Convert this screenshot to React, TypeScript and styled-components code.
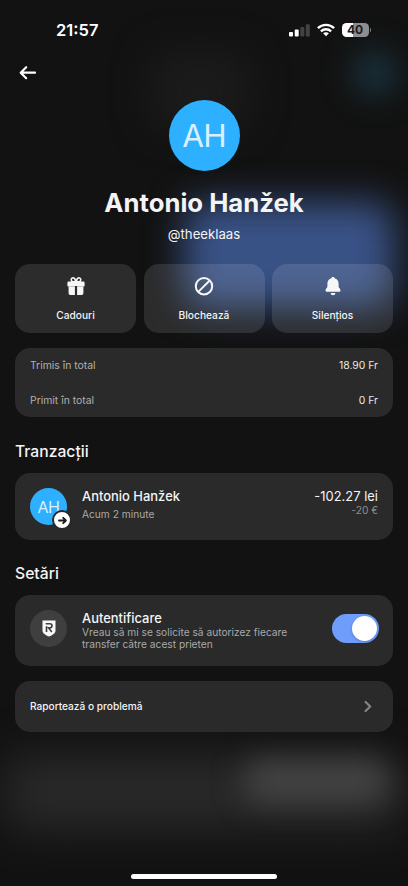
import React from 'react';
import styled, { createGlobalStyle } from 'styled-components';

const GlobalStyle = createGlobalStyle`
  * { box-sizing: border-box; }
  body { margin: 0; background: #121212; }
`;

const Screen = styled.main`
  position: relative;
  isolation: isolate;
  display: flex;
  flex-direction: column;
  width: 408px;
  height: 886px;
  overflow: hidden;
  background: #121212;
  color: #f4f4f5;
  font-family: Inter, "Noto Sans", sans-serif;
`;

const Glow = styled.div<{ $x: number; $y: number; $w: number; $h: number; $color: string; $blur: number }>`
  position: absolute;
  z-index: -1;
  left: ${(p) => p.$x}px;
  top: ${(p) => p.$y}px;
  width: ${(p) => p.$w}px;
  height: ${(p) => p.$h}px;
  border-radius: 20px;
  background: ${(p) => p.$color};
  filter: blur(${(p) => p.$blur}px);
`;

const StatusBar = styled.header`
  display: flex;
  justify-content: space-between;
  align-items: center;
  height: 60px;
  padding: 0 37px 0 56px;
`;

const Clock = styled.time`
  font-size: 16.5px;
  font-weight: 600;
  line-height: 20px;
  color: #fff;
`;

const StatusIcons = styled.div`
  display: flex;
  align-items: center;
  gap: 7px;
`;

const Battery = styled.div`
  display: flex;
  align-items: center;
  gap: 1px;
`;

const BatteryBody = styled.span`
  width: 27px;
  height: 14px;
  border-radius: 4.5px;
  background: linear-gradient(90deg, #fff 0 40%, #8b8d91 40%);
  color: #1a1b1d;
  font-size: 12px;
  font-weight: 700;
  line-height: 14px;
  text-align: center;
`;

const BatteryTip = styled.span`
  width: 1.5px;
  height: 4px;
  border-radius: 0 2px 2px 0;
  background: #77797d;
`;

const NavBar = styled.nav`
  display: flex;
  height: 40px;
  padding: 4px 0 0 19px;
`;

const BackButton = styled.button`
  display: block;
  width: 18px;
  height: 18px;
  padding: 0;
  border: 0;
  background: none;
`;

const Profile = styled.section`
  display: flex;
  flex-direction: column;
  align-items: center;
  height: 164px;
`;

const Avatar = styled.div<{ $size: number; $font: number }>`
  display: flex;
  align-items: center;
  justify-content: center;
  width: ${(p) => p.$size}px;
  height: ${(p) => p.$size}px;
  border-radius: 50%;
  background: #2db0ff;
  color: #d9f1ff;
  font-size: ${(p) => p.$font}px;
  line-height: 1;
  letter-spacing: -0.03em;
`;

const Name = styled.h1`
  margin: 15px 0 0;
  font-size: 25.7px;
  font-weight: 700;
  line-height: 34px;
  white-space: nowrap;
`;

const Handle = styled.p`
  margin: 5px 0 0;
  font-size: 13.2px;
  line-height: 18px;
`;

const Content = styled.div`
  display: flex;
  flex-direction: column;
  padding: 0 15px;
`;

const Actions = styled.div`
  display: grid;
  grid-template-columns: repeat(3, 1fr);
  gap: 7.5px;
  margin-bottom: 15px;
`;

const Action = styled.button`
  display: flex;
  flex-direction: column;
  align-items: center;
  gap: 10px;
  height: 69px;
  padding: 12px 0 0;
  border: 0;
  border-radius: 15px;
  background: rgba(255, 255, 255, 0.11);
  color: #f4f4f5;
  font: 500 10.2px/18px Inter, sans-serif;
`;

const Card = styled.section<{ $height: number; $pad?: string }>`
  display: flex;
  height: ${(p) => p.$height}px;
  padding: ${(p) => p.$pad ?? '15px'};
  border-radius: 15px;
  background: #2a2a2a;
`;

const Totals = styled.dl`
  display: flex;
  flex: 1;
  flex-direction: column;
  justify-content: space-between;
  margin: 0;
`;

const TotalRow = styled.div`
  display: flex;
  justify-content: space-between;
  font-size: 10.4px;
  line-height: 16px;
`;

const TotalLabel = styled.dt`
  color: #b0b0b2;
`;

const TotalValue = styled.dd`
  margin: 0;
  color: #e8e8e9;
`;

const SectionTitle = styled.h2<{ $top: number }>`
  margin: ${(p) => p.$top}px 0 10px;
  font-size: 15.7px;
  font-weight: 500;
  line-height: 22px;
`;

const Badge = styled.span`
  position: absolute;
  right: -5px;
  bottom: -5px;
  display: flex;
  align-items: center;
  justify-content: center;
  width: 20px;
  height: 20px;
  border: 2px solid #2a2a2a;
  border-radius: 50%;
  background: #fff;
`;

const Media = styled.div`
  position: relative;
  flex: none;
  width: 37px;
  height: 37px;
  margin-right: 15px;
`;

const ShieldDisc = styled.div`
  display: flex;
  align-items: center;
  justify-content: center;
  width: 37px;
  height: 37px;
  border-radius: 50%;
  background: #3f3f3f;
`;

const Details = styled.div`
  display: flex;
  flex: 1;
  flex-direction: column;
`;

const Amounts = styled.div`
  display: flex;
  flex-direction: column;
  align-items: flex-end;
`;

const ItemTitle = styled.span`
  font-size: 12.95px;
  font-weight: 500;
  line-height: 16px;
  white-space: nowrap;
`;

const Amount = styled.span`
  font-size: 12.95px;
  line-height: 16px;
`;

const Muted = styled.span<{ $top?: number; $line?: number; $color?: string }>`
  margin-top: ${(p) => p.$top ?? 0}px;
  color: ${(p) => p.$color ?? '#a9a9ab'};
  font-size: 10.2px;
  line-height: ${(p) => p.$line ?? 14}px;
  white-space: nowrap;
`;

const Toggle = styled.button`
  display: flex;
  justify-content: flex-end;
  align-items: center;
  width: 47px;
  height: 29px;
  margin: 4px -1px 0 0;
  padding: 0 2px 0 0;
  border: 0;
  border-radius: 15px;
  background: #6f9dfb;
`;

const Knob = styled.span`
  width: 25px;
  height: 25px;
  border-radius: 50%;
  background: #fff;
  box-shadow: 0 1px 3px rgba(0, 0, 0, 0.2);
`;

const Spacer = styled.div`
  height: 15px;
`;

const ReportLabel = styled.span`
  flex: 1;
  font-size: 10.15px;
  font-weight: 500;
  line-height: 16px;
`;

const HomeIndicator = styled.div`
  width: 146px;
  height: 5px;
  margin: auto auto 7px;
  border-radius: 3px;
  background: #fff;
`;

const SignalIcon = () => (
  <svg width="21" height="14" viewBox="0 0 21 14" fill="#fff">
    <rect x="0" y="9" width="4" height="4.5" rx="1" />
    <rect x="5.7" y="6.5" width="4" height="7" rx="1" />
    <rect x="11.3" y="4" width="4" height="9.5" rx="1" fill="#414244" />
    <rect x="16.8" y="1.3" width="4" height="12.2" rx="1" fill="#414244" />
  </svg>
);

const WifiIcon = () => (
  <svg width="18" height="14" viewBox="0 0 18 14" fill="none" stroke="#fff" strokeWidth="2.4">
    <path d="M.9 5.1C5.4.8 12.6.8 17.1 5.1" />
    <path d="M3.9 8.3C6.7 5.6 11.3 5.6 14.1 8.3" />
    <path d="M9 13.2 6.1 10.3C7.7 8.8 10.3 8.8 11.9 10.3Z" fill="#fff" stroke="none" />
  </svg>
);

const BackIcon = () => (
  <svg width="18" height="18" viewBox="0 0 18 18" fill="none" stroke="#fff" strokeWidth="2.2" strokeLinecap="round" strokeLinejoin="round">
    <path d="M16 8.7H2M7.2 3.2 1.7 8.7 7.2 14.2" />
  </svg>
);

const GiftIcon = () => (
  <svg width="20" height="20" viewBox="0 0 20 20" fill="#f7f7f8">
    <path d="M1.4 6.8Q1.4 5.6 2.6 5.6H17.4Q18.6 5.6 18.6 6.8V9.4Q18.6 10.6 17.6 10.6H11.1V10H8.9V10.6H2.4Q1.4 10.6 1.4 9.4Z" />
    <path d="M2.6 10.4H8.9V18.9H4.2Q2.6 18.9 2.6 17.3ZM11.1 10.4H17.4V17.3Q17.4 18.9 15.8 18.9H11.1Z" />
    <path d="M9.6 5.9H7.2Q5.2 5.4 5.2 3.7 5.4 1.8 7.2 1.8 9.3 2 9.6 5.9ZM10.4 5.9H12.8Q14.8 5.4 14.8 3.7 14.6 1.8 12.8 1.8 10.7 2 10.4 5.9Z" fill="none" stroke="#f7f7f8" strokeWidth="1.6" />
  </svg>
);

const BlockIcon = () => (
  <svg width="20" height="20" viewBox="0 0 20 20" fill="none" stroke="#f7f7f8" strokeWidth="2">
    <circle cx="10" cy="10.2" r="8.2" />
    <path d="M4.3 15.9 15.7 4.5" />
  </svg>
);

const BellIcon = () => (
  <svg width="20" height="20" viewBox="0 0 20 20" fill="#f7f7f8">
    <path d="M10 1C10.9 1 11.5 1.5 11.6 2.3 14.2 3 15.6 5.1 15.6 7.8V10.4C15.6 11.7 17.5 12.5 17.5 14.6Q17.5 15.7 16.4 15.7H3.6Q2.5 15.7 2.5 14.6C2.5 12.5 4.4 11.7 4.4 10.4V7.8C4.4 5.1 5.8 3 8.4 2.3 8.5 1.5 9.1 1 10 1ZM7.5 17.1H12.5Q12 19.3 10 19.3T7.5 17.1Z" />
  </svg>
);

const SendIcon = () => (
  <svg width="11" height="11" viewBox="0 0 11 11" fill="none" stroke="#1c1c1c" strokeWidth="1.9" strokeLinecap="round" strokeLinejoin="round">
    <path d="M2 5.5H8.9M6.2 2.8 8.9 5.5 6.2 8.2" />
  </svg>
);

const ShieldIcon = () => (
  <svg width="14" height="17" viewBox="0 0 14 17">
    <path d="M.5 .5H13.5V10.4C13.5 13.2 11.2 14.5 7 16.5 2.8 14.5 .5 13.2 .5 10.4Z" fill="#fafafa" />
    <path d="M4.5 12.1V6.3M3.7 3.8H7.8Q10 3.8 10 5.8T7.8 7.9H6.6L9.8 12.1" fill="none" stroke="#3f3f3f" strokeWidth="1.6" />
  </svg>
);

const ChevronIcon = () => (
  <svg width="8" height="14" viewBox="0 0 8 14" fill="none" stroke="#858587" strokeWidth="2.2" strokeLinecap="round" strokeLinejoin="round">
    <path d="M1.6 4 6.2 8.5 1.6 13" />
  </svg>
);

const actions = [
  { label: 'Cadouri', icon: <GiftIcon /> },
  { label: 'Blochează', icon: <BlockIcon /> },
  { label: 'Silențios', icon: <BellIcon /> },
];

const totals = [
  { label: 'Trimis în total', value: '18.90 Fr' },
  { label: 'Primit în total', value: '0 Fr' },
];

export default function App() {
  return (
    <>
      <GlobalStyle />
      <Screen>
        <Glow $x={150} $y={50} $w={100} $h={80} $color="#1b1b1b" $blur={18} />
        <Glow $x={353} $y={51} $w={44} $h={44} $color="#1a323d" $blur={15} />
        <Glow $x={184} $y={202} $w={210} $h={106} $color="#395286" $blur={18} />
        <Glow $x={4} $y={755} $w={400} $h={75} $color="#292929" $blur={22} />
        <Glow $x={243} $y={760} $w={146} $h={42} $color="#444" $blur={15} />

        <StatusBar>
          <Clock>21:57</Clock>
          <StatusIcons>
            <SignalIcon />
            <WifiIcon />
            <Battery>
              <BatteryBody>40</BatteryBody>
              <BatteryTip />
            </Battery>
          </StatusIcons>
        </StatusBar>
        <NavBar>
          <BackButton aria-label="Înapoi"><BackIcon /></BackButton>
        </NavBar>
        <Profile>
          <Avatar $size={71} $font={31.5}>AH</Avatar>
          <Name>Antonio Hanžek</Name>
          <Handle>@theeklaas</Handle>
        </Profile>

        <Content>
          <Actions>
            {actions.map((a) => (
              <Action key={a.label}>{a.icon}{a.label}</Action>
            ))}
          </Actions>

          <Card $height={69} $pad="10px 15px 8px">
            <Totals>
              {totals.map((t) => (
                <TotalRow key={t.label}>
                  <TotalLabel>{t.label}</TotalLabel>
                  <TotalValue>{t.value}</TotalValue>
                </TotalRow>
              ))}
            </Totals>
          </Card>

          <SectionTitle $top={24}>Tranzacții</SectionTitle>
          <Card $height={67}>
            <Media>
              <Avatar $size={37} $font={16}>AH</Avatar>
              <Badge><SendIcon /></Badge>
            </Media>
            <Details>
              <ItemTitle>Antonio Hanžek</ItemTitle>
              <Muted $top={3}>Acum 2 minute</Muted>
            </Details>
            <Amounts>
              <Amount>-102.27 lei</Amount>
              <Muted $top={-1} $color="#8d8d8f">-20 €</Muted>
            </Amounts>
          </Card>

          <SectionTitle $top={23}>Setări</SectionTitle>
          <Card $height={71}>
            <Media><ShieldDisc><ShieldIcon /></ShieldDisc></Media>
            <Details>
              <ItemTitle>Autentificare</ItemTitle>
              <Muted $line={12}>
                Vreau să mi se solicite să autorizez fiecare<br />transfer către acest prieten
              </Muted>
            </Details>
            <Toggle role="switch" aria-checked="true" aria-label="Autentificare"><Knob /></Toggle>
          </Card>
          <Spacer />
          <Card $height={51} $pad="17px 21px 18px 15px">
            <ReportLabel>Raportează o problemă</ReportLabel>
            <ChevronIcon />
          </Card>
        </Content>
        <HomeIndicator />
      </Screen>
    </>
  );
}
